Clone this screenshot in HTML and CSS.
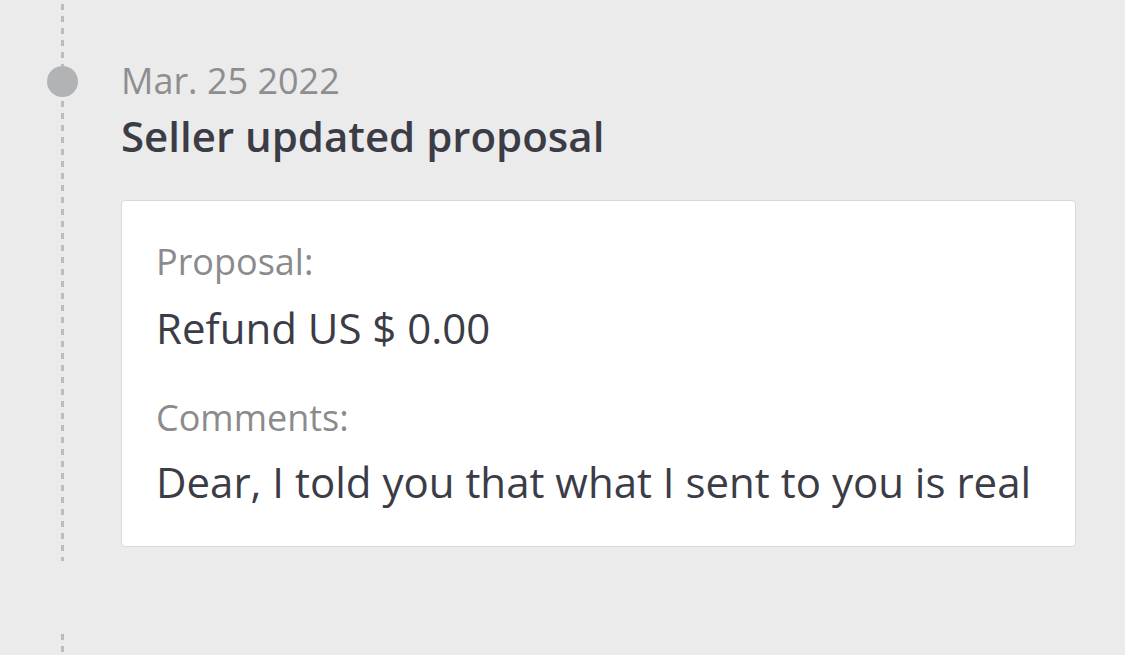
FILE: index.html
```html
<!DOCTYPE html>
<html lang="en">
<head>
<meta charset="utf-8">
<title>Timeline</title>
<link rel="stylesheet" href="styles.css">
</head>
<body>
<div class="timeline">
  <div class="item">
    <div class="rail">
      <span class="seg seg-top"></span>
      <span class="dot"></span>
      <span class="seg seg-bottom"></span>
    </div>
    <div class="content">
      <div class="date">Mar. 25 2022</div>
      <div class="title">Seller updated proposal</div>
      <div class="card">
        <div class="label">Proposal:</div>
        <div class="value">Refund US $ 0.00</div>
        <div class="label label-2">Comments:</div>
        <div class="value">Dear, I told you that what I sent to you is real</div>
      </div>
    </div>
  </div>
  <div class="item item-next">
    <div class="rail">
      <span class="seg seg-bottom"></span>
    </div>
  </div>
</div>
</body>
</html>
```

FILE: styles.css
```css
html, body {
  margin: 0;
  padding: 0;
  background: #ebebeb;
  width: 1125px;
  height: 655px;
  overflow: hidden;
  font-family: "Open Sans", "Noto Sans", sans-serif;
}

.timeline {
  display: flex;
  flex-direction: column;
  height: 655px;
}

.item {
  display: flex;
  height: 561px;
}

.item-next {
  margin-top: 69px;
  flex: 1;
  height: auto;
}

.rail {
  width: 31px;
  margin-left: 47px;
  display: flex;
  flex-direction: column;
  align-items: center;
  flex-shrink: 0;
}

.seg {
  width: 3px;
  background: repeating-linear-gradient(to bottom, transparent 0 4px, #bcbcbc 4px 10px, transparent 10px 12px);
}

.seg-top {
  height: 66px;
}

.seg-bottom {
  flex: 1;
}

.dot {
  width: 31px;
  height: 31px;
  border-radius: 50%;
  background: #b2b3b5;
  flex-shrink: 0;
}

.content {
  margin-left: 43px;
  width: 955px;
  padding-top: 58px;
}

.date {
  font-size: 36px;
  line-height: 46px;
  color: #8e8e90;
}

.title {
  font-size: 42px;
  font-weight: 600;
  line-height: 50px;
  color: #3b3c46;
  margin-top: 7px;
}

.card {
  margin-top: 39px;
  background: #ffffff;
  border: 1px solid #d9d9d9;
  border-radius: 4px;
  padding: 39px 34px 0;
  height: 347px;
  box-sizing: border-box;
}

.label {
  font-size: 36px;
  line-height: 44px;
  color: #8b8b8d;
}

.value {
  font-size: 42px;
  line-height: 50px;
  color: #3b3c46;
  margin-top: 19px;
}

.label-2 {
  margin-top: 43px;
}

.label-2 + .value {
  margin-top: 17px;
}
```
